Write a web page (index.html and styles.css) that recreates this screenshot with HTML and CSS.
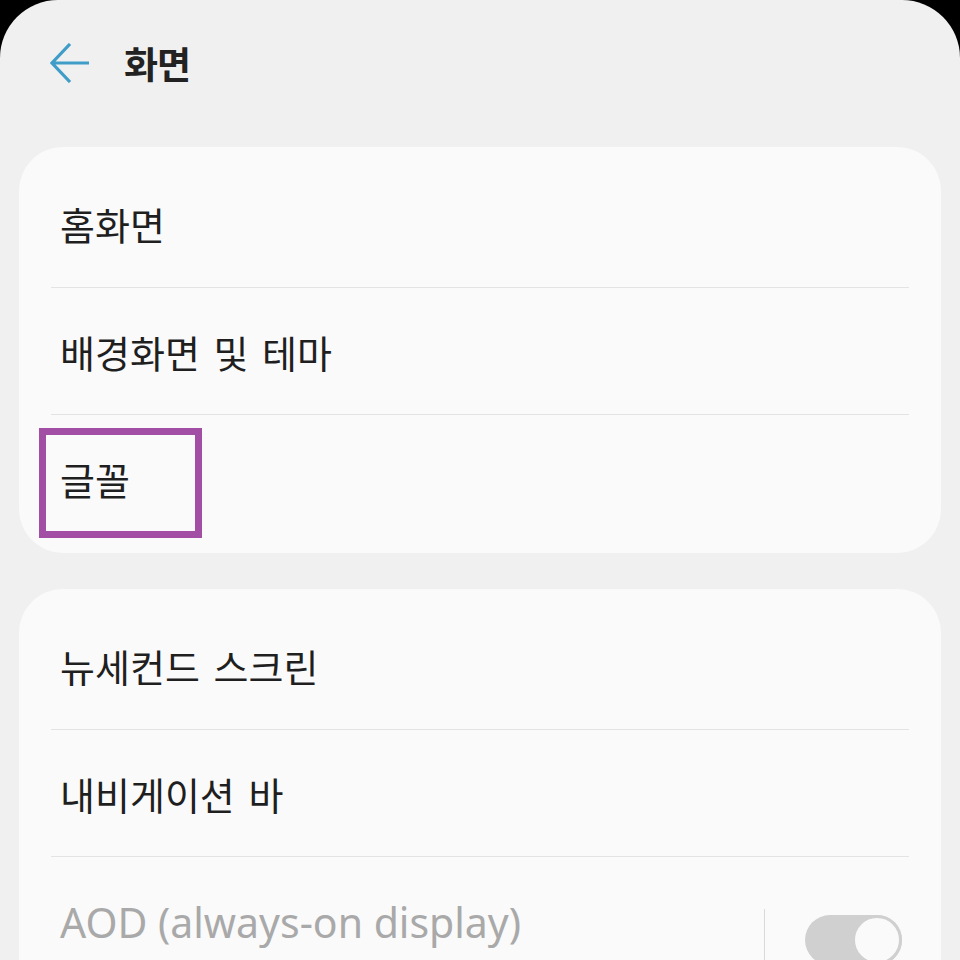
FILE: index.html
```html
<!DOCTYPE html>
<html lang="ko">
<head>
    <meta charset="UTF-8">
    <meta name="viewport" content="width=device-width, initial-scale=1.0">
    <title>화면</title>
    <link rel="stylesheet" href="styles.css">
</head>
<body>
    <div class="screen">
        <header class="appbar">
            <a href="#" class="back-btn" aria-label="뒤로">
                <svg width="40" height="40" viewBox="0 0 40 40">
                    <path d="M39 20H3M20 1L2 20L20 39" fill="none" stroke="#3f9dc7" stroke-width="3.2" stroke-linejoin="miter"/>
                </svg>
            </a>
            <h1 class="appbar-title">화면</h1>
        </header>

        <section class="card">
            <div class="row"><span class="row-title">홈화면</span></div>
            <div class="row"><span class="row-title">배경화면 및 테마</span></div>
            <div class="row">
                <span class="row-title">글꼴</span>
                <div class="highlight"></div>
            </div>
        </section>

        <section class="card">
            <div class="row"><span class="row-title">뉴세컨드 스크린</span></div>
            <div class="row"><span class="row-title">내비게이션 바</span></div>
            <div class="row row-switch">
                <div class="row-text">
                    <span class="row-title disabled">AOD (always-on display)</span>
                    <span class="row-summary">예약된 시간에만 표시</span>
                </div>
                <div class="switch-divider"></div>
                <div class="switch">
                    <div class="switch-thumb"></div>
                </div>
            </div>
        </section>
    </div>
</body>
</html>
```

FILE: styles.css
```css
* {
    margin: 0;
    padding: 0;
    box-sizing: border-box;
}

body {
    background: #000;
    font-family: "Noto Sans CJK KR", "Noto Sans", sans-serif;
    color: #222;
    overflow: hidden;
}

.screen {
    height: 960px;
    background: #f0f0f0;
    border-radius: 58px 58px 0 0;
    overflow: hidden;
    padding: 0 19px;
}

/* App bar */
.appbar {
    height: 128px;
    display: flex;
    align-items: center;
    gap: 34px;
    padding-left: 31px;
    padding-bottom: 2px;
}

.back-btn {
    display: flex;
    width: 40px;
    height: 40px;
}

.appbar-title {
    font-size: 37px;
    font-weight: 700;
    color: #222;
    letter-spacing: -1px;
}

/* Cards */
.card {
    margin-top: 19px;
    background: #fafafa;
    border-radius: 44px;
    padding: 13px 32px 12px;
}

.card + .card {
    margin-top: 36px;
}

.row {
    position: relative;
    height: 127px;
    display: flex;
    align-items: center;
    padding-left: 9px;
}

.row + .row {
    border-top: 1.5px solid #e3e3e3;
}

.row-title {
    font-size: 38px;
    word-spacing: 3px;
    color: #1f1f1f;
}

/* Highlight box over selected row */
.highlight {
    position: absolute;
    top: 13px;
    left: -12px;
    width: 163px;
    height: 110px;
    border: 7px solid #a34ea5;
}

/* Switch row */
.row-switch {
    align-items: flex-start;
    padding-top: 39px;
    height: 160px;
}

.row-text {
    flex: 1;
    display: flex;
    flex-direction: column;
}

.row-title.disabled {
    font-family: "Noto Sans", sans-serif;
    font-size: 41px;
    line-height: 52px;
    color: #a9a9a9;
    word-spacing: 0;
}

.row-summary {
    font-size: 30px;
    color: #bcbcbc;
    margin-top: 4px;
}

.switch-divider {
    width: 1.5px;
    height: 80px;
    background: #d9d9d9;
    margin-top: 13px;
    margin-right: 40px;
}

.switch {
    position: relative;
    width: 97px;
    height: 50px;
    margin-top: 19px;
    margin-right: 7px;
    border-radius: 25px;
    background: #d0d0d0;
}

.switch-thumb {
    position: absolute;
    top: 0;
    right: 0;
    width: 50px;
    height: 50px;
    border-radius: 50%;
    background: #fafafa;
    border: 3px solid #d0d0d0;
}
```
